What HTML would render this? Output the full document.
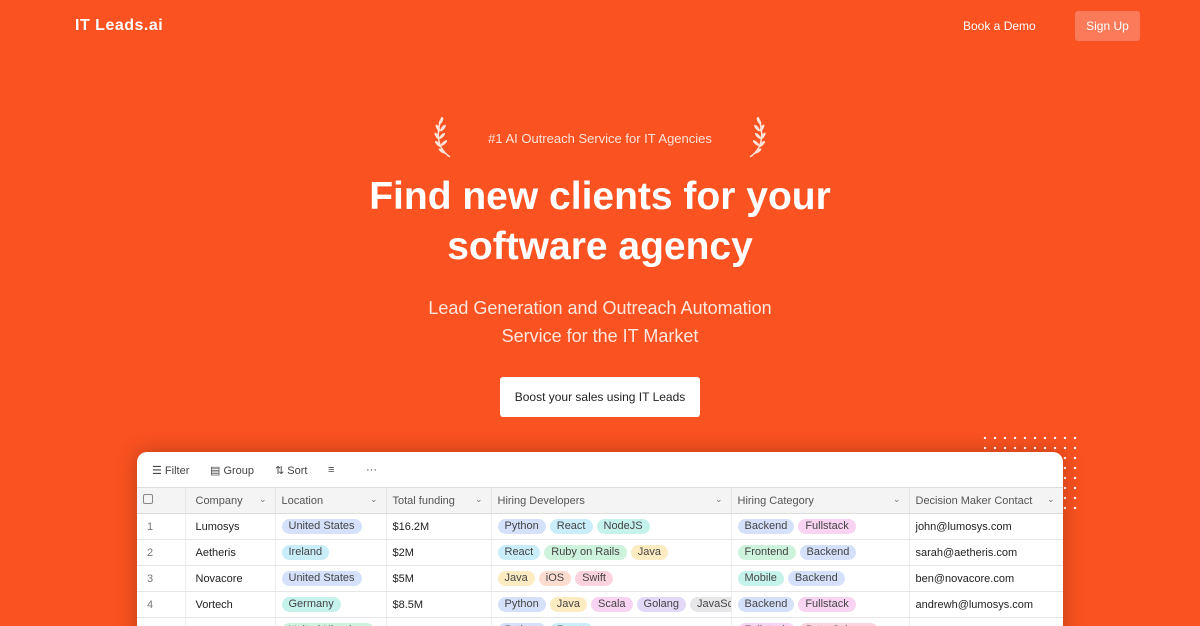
<!DOCTYPE html>
<html style="width:1200px;height:626px;overflow:hidden"><head><meta charset="utf-8"><style>
*{margin:0;padding:0;box-sizing:border-box}
body{width:1200px;height:626px;overflow:hidden;background:#FA5220;font-family:"Liberation Sans",sans-serif;position:relative;color:#fff}
.logo{position:absolute;left:75px;top:17px;font-size:16px;font-weight:bold;letter-spacing:.5px}
.demo{position:absolute;left:963px;top:19px;font-size:12px}
.sign{position:absolute;left:1075px;top:11px;width:65px;height:30px;background:#FB7A5A;border-radius:3px;font-size:12px;text-align:center;line-height:30px}
.badge{position:absolute;left:0;width:1200px;top:131px;text-align:center;font-size:13px;color:#FDE3DA}
h1{position:absolute;left:0;width:1200px;top:172px;text-align:center;font-size:39px;line-height:50px;font-weight:bold}
.sub{position:absolute;left:0;width:1200px;top:294px;text-align:center;font-size:18px;line-height:28px;color:#FFE6DD}
.btn{position:absolute;left:500px;top:377px;width:200px;height:40px;background:#fff;color:#222;border-radius:3px;font-size:12px;text-align:center;line-height:40px}
.dots{position:absolute;left:980px;top:433px;width:100px;height:82px;background-image:radial-gradient(circle,#fff 1px,transparent 1.4px);background-size:10px 10px}
.card{position:absolute;left:137px;top:452px;width:926px;height:200px;background:#fff;border-radius:10px;box-shadow:0 0 20px rgba(0,0,0,.25);color:#333;overflow:hidden}
.tb{height:35px;font-size:11px;color:#444;position:relative}
.tb span{position:absolute;top:12px}
table{border-collapse:collapse;font-size:11px;table-layout:fixed;width:926px}
th{background:#f4f4f4;height:26px;font-weight:normal;text-align:left;color:#555;border-top:1px solid #ddd;border-bottom:1px solid #ddd;border-right:1px solid #e4e4e4;padding-left:6px;position:relative}
th i{position:absolute;right:8px;top:6px;font-style:normal;font-size:9px;color:#777}
td{height:26px;border-bottom:1px solid #e6e6e6;border-right:1px solid #eee;padding-left:6px;white-space:nowrap;overflow:hidden;color:#222;vertical-align:middle}
td.n{color:#777;padding-left:10px}
.t{display:inline-block;padding:0 7px;border-radius:8px;line-height:15px;margin-right:4px;color:#444;vertical-align:middle}
.b{background:#D5E1FA}.c{background:#C9EEFA}.g{background:#CDF3DC}.y{background:#FDEBC2}.o{background:#FDDCD0}.p{background:#F9D3F2}.v{background:#E2D8F8}.k{background:#E7E7EA}.q{background:#C6F2EC}.r{background:#FBD3DE}
</style></head><body>
<div class="logo">IT Leads.ai</div>
<div class="demo">Book a Demo</div>
<div class="sign">Sign Up</div>
<svg style="position:absolute;left:432px;top:113px" width="22" height="46" viewBox="0 0 22 46" fill="none" stroke="#FDE3DA" stroke-width="1.5"><path d="M18 44 C6 36 3 22 10 4"/><g fill="#FDE3DA" stroke="none"><ellipse cx="9" cy="8" rx="1.5" ry="4" transform="rotate(30 9 8)"/><ellipse cx="6" cy="15" rx="1.5" ry="4" transform="rotate(-30 6 15)"/><ellipse cx="11" cy="15" rx="1.5" ry="4" transform="rotate(40 11 15)"/><ellipse cx="5" cy="23" rx="1.5" ry="4" transform="rotate(-35 5 23)"/><ellipse cx="10" cy="23" rx="1.5" ry="4" transform="rotate(45 10 23)"/><ellipse cx="6" cy="31" rx="1.5" ry="4" transform="rotate(-45 6 31)"/><ellipse cx="12" cy="30" rx="1.5" ry="4" transform="rotate(50 12 30)"/><ellipse cx="10" cy="38" rx="1.5" ry="4" transform="rotate(-55 10 38)"/></g></svg>
<svg style="position:absolute;left:746px;top:113px;transform:scaleX(-1)" width="22" height="46" viewBox="0 0 22 46" fill="none" stroke="#FDE3DA" stroke-width="1.5"><path d="M18 44 C6 36 3 22 10 4"/><g fill="#FDE3DA" stroke="none"><ellipse cx="9" cy="8" rx="1.5" ry="4" transform="rotate(30 9 8)"/><ellipse cx="6" cy="15" rx="1.5" ry="4" transform="rotate(-30 6 15)"/><ellipse cx="11" cy="15" rx="1.5" ry="4" transform="rotate(40 11 15)"/><ellipse cx="5" cy="23" rx="1.5" ry="4" transform="rotate(-35 5 23)"/><ellipse cx="10" cy="23" rx="1.5" ry="4" transform="rotate(45 10 23)"/><ellipse cx="6" cy="31" rx="1.5" ry="4" transform="rotate(-45 6 31)"/><ellipse cx="12" cy="30" rx="1.5" ry="4" transform="rotate(50 12 30)"/><ellipse cx="10" cy="38" rx="1.5" ry="4" transform="rotate(-55 10 38)"/></g></svg>
<div class="badge">#1 AI Outreach Service for IT Agencies</div>
<h1>Find new clients for your<br>software agency</h1>
<div class="sub">Lead Generation and Outreach Automation<br>Service for the IT Market</div>
<div class="btn">Boost your sales using IT Leads</div>
<div class="dots"></div>
<div class="card">
<div class="tb"><span style="left:15px">☰ Filter</span><span style="left:73px">▤ Group</span><span style="left:138px">⇅ Sort</span><span style="left:191px">≡</span><span style="left:229px">···</span></div>
<table>
<colgroup><col style="width:48px"><col style="width:90px"><col style="width:111px"><col style="width:105px"><col style="width:240px"><col style="width:178px"><col style="width:154px"></colgroup>
<tr><th><span style="display:inline-block;width:10px;height:10px;border:1px solid #888;border-radius:2px"></span></th><th style="padding-left:10px">Company<i>⌄</i></th><th>Location<i>⌄</i></th><th>Total funding<i>⌄</i></th><th>Hiring Developers<i>⌄</i></th><th>Hiring Category<i>⌄</i></th><th>Decision Maker Contact<i>⌄</i></th></tr>
<tr><td class="n">1</td><td style="padding-left:10px">Lumosys</td><td><span class="t b">United States</span></td><td>$16.2M</td><td><span class="t b">Python</span><span class="t c">React</span><span class="t q">NodeJS</span></td><td><span class="t b">Backend</span><span class="t p">Fullstack</span></td><td>john@lumosys.com</td></tr>
<tr><td class="n">2</td><td style="padding-left:10px">Aetheris</td><td><span class="t c">Ireland</span></td><td>$2M</td><td><span class="t c">React</span><span class="t g">Ruby on Rails</span><span class="t y">Java</span></td><td><span class="t g">Frontend</span><span class="t b">Backend</span></td><td>sarah@aetheris.com</td></tr>
<tr><td class="n">3</td><td style="padding-left:10px">Novacore</td><td><span class="t b">United States</span></td><td>$5M</td><td><span class="t y">Java</span><span class="t o">iOS</span><span class="t r">Swift</span></td><td><span class="t q">Mobile</span><span class="t b">Backend</span></td><td>ben@novacore.com</td></tr>
<tr><td class="n">4</td><td style="padding-left:10px">Vortech</td><td><span class="t q">Germany</span></td><td>$8.5M</td><td><span class="t b">Python</span><span class="t y">Java</span><span class="t p">Scala</span><span class="t v">Golang</span><span class="t k">JavaScript</span></td><td><span class="t b">Backend</span><span class="t p">Fullstack</span></td><td>andrewh@lumosys.com</td></tr>
<tr><td class="n">5</td><td style="padding-left:10px">Quintal</td><td><span class="t g">United Kingdom</span></td><td>$4M</td><td><span class="t b">Python</span><span class="t c">React</span></td><td><span class="t p">Fullstack</span><span class="t r">Data Science</span></td><td>mark@quintal.com</td></tr>
</table>
</div>
</body></html>
